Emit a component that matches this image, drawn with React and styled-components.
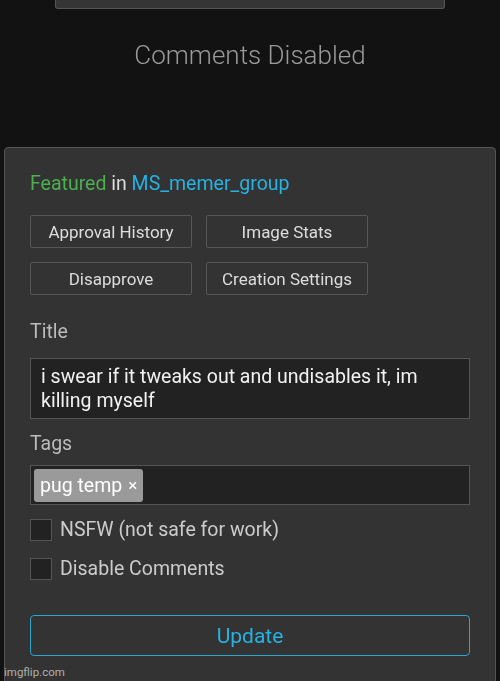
import React from 'react'
import styled, { createGlobalStyle } from 'styled-components'

const GlobalStyle = createGlobalStyle`
    html, body {
        margin: 0;
        padding: 0;
        background: #121212;
    }
    body {
        font-family: Roboto, "Liberation Sans", Arial, sans-serif;
        overflow: hidden;
    }
`

const Page = styled.div`
    position: relative;
    width: 500px;
    height: 681px;
    overflow: hidden;
    background: #121212;
`

const TopBox = styled.div`
    width: 388px;
    height: 8px;
    margin: 0 auto;
    background: #353535;
    border: 1px solid #555;
    border-top: none;
    border-radius: 0 0 3px 3px;
`

const Notice = styled.div`
    margin-top: 27px;
    text-align: center;
    font-size: 26px;
    font-weight: 300;
    line-height: 38px;
    color: #9a9a9a;
`

const Panel = styled.div`
    margin: 73px 4px 0;
    padding: 24px 25px 30px;
    background: #333;
    border: 1px solid #555;
    border-radius: 4px;
    height: 600px;
    box-sizing: border-box;
`

const Featured = styled.div`
    font-size: 19.5px;
    line-height: 24px;
    color: #ddd;
`

const Green = styled.span`
    color: #4caf50;
`

const Link = styled.span`
    color: #26b2e2;
`

const ButtonGrid = styled.div`
    display: grid;
    grid-template-columns: 162px 162px;
    column-gap: 14px;
    row-gap: 14px;
    margin-top: 19px;
`

const Button = styled.div`
    height: 33px;
    box-sizing: border-box;
    border: 1px solid #575757;
    border-radius: 2px;
    display: flex;
    align-items: center;
    justify-content: center;
    font-size: 17px;
    color: #ddd;
`

const Label = styled.div`
    margin-top: ${p => p.$top}px;
    font-size: 19.5px;
    line-height: 24px;
    color: #bbb;
`

const TitleInput = styled.textarea`
    display: block;
    width: 100%;
    height: 61px;
    margin-top: 14px;
    box-sizing: border-box;
    padding: 6px 10px;
    background: #222;
    border: 1px solid #555;
    border-radius: 0;
    color: #f2f2f2;
    font-family: Roboto, "Liberation Sans", Arial, sans-serif;
    font-size: 19.5px;
    line-height: 24px;
    outline: none;
    resize: none;
`

const TagBox = styled.div`
    display: flex;
    align-items: center;
    height: 40px;
    margin-top: 9px;
    box-sizing: border-box;
    padding: 3px;
    background: #222;
    border: 1px solid #555;
`

const Tag = styled.span`
    height: 33px;
    display: flex;
    align-items: center;
    padding: 0 6px;
    background: #9a9a9a;
    border-radius: 3px;
    color: #fff;
    font-size: 19.5px;
`

const Remove = styled.span`
    margin-left: 6px;
    font-size: 17px;
`

const CheckRow = styled.label`
    display: flex;
    align-items: center;
    gap: 8px;
    height: 22px;
    line-height: 22px;
    margin-top: ${p => p.$top}px;
    font-size: 19.5px;
    color: #ccc;
`

const Box = styled.span`
    width: 22px;
    height: 22px;
    box-sizing: border-box;
    background: #222;
    border: 1px solid #555;
`

const UpdateButton = styled.div`
    height: 41px;
    margin-top: 35px;
    box-sizing: border-box;
    border: 1px solid #2aa5cc;
    border-radius: 4px;
    display: flex;
    align-items: center;
    justify-content: center;
    font-size: 21px;
    color: #26b2e2;
`

const Watermark = styled.div`
    position: absolute;
    left: 4px;
    bottom: 2px;
    font-size: 11.5px;
    color: #b0b0b0;
`

const App = () => {
    return (
        <Page>
            <GlobalStyle />
            <TopBox />
            <Notice>Comments Disabled</Notice>
            <Panel>
                <Featured>
                    <Green>Featured</Green> in <Link>MS_memer_group</Link>
                </Featured>
                <ButtonGrid>
                    <Button>Approval History</Button>
                    <Button>Image Stats</Button>
                    <Button>Disapprove</Button>
                    <Button>Creation Settings</Button>
                </ButtonGrid>
                <Label $top={25}>Title</Label>
                <TitleInput
                    readOnly
                    defaultValue="i swear if it tweaks out and undisables it, im killing myself"
                />
                <Label $top={13}>Tags</Label>
                <TagBox>
                    <Tag>pug temp<Remove>×</Remove></Tag>
                </TagBox>
                <CheckRow $top={14}>
                    <Box />
                    NSFW (not safe for work)
                </CheckRow>
                <CheckRow $top={17}>
                    <Box />
                    Disable Comments
                </CheckRow>
                <UpdateButton>Update</UpdateButton>
            </Panel>
            <Watermark>imgflip.com</Watermark>
        </Page>
    )
}

export default App
